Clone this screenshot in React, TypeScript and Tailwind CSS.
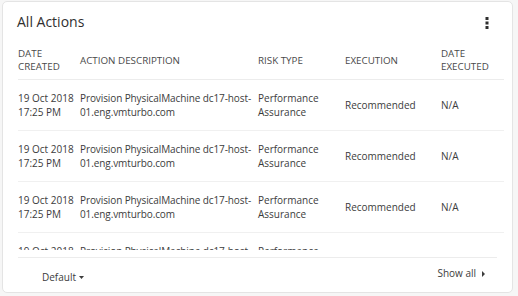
const rows = Array.from({ length: 4 }, () => ({
  date: "19 Oct 2018",
  time: "17:25 PM",
  desc: "Provision PhysicalMachine dc17-host-01.eng.vmturbo.com",
  risk: "Performance Assurance",
  exec: "Recommended",
  executed: "N/A",
}));

export default function App() {
  return (
    <div
      className="h-[296px] w-[518px] bg-[#f6f6f6] pl-[2px] pt-[1px] text-[#3c3c3c]"
      style={{ fontFamily: '"Open Sans", "Noto Sans", sans-serif' }}
    >
      <div className="flex h-[292px] w-[511px] flex-col overflow-hidden rounded-[5px] border border-[#e4e4e4] bg-white">
        <div className="flex h-[39px] items-center justify-between pl-[14px] pr-[23px]">
          <h2 className="text-[14px] font-normal text-[#2f2f2f]">All Actions</h2>
          <svg width="4" height="12" viewBox="0 0 4 12" className="mt-[3px]">
            <rect x="0.5" y="0" width="3" height="3" fill="#2f2f2f" />
            <rect x="0.5" y="4.5" width="3" height="3" fill="#2f2f2f" />
            <rect x="0.5" y="9" width="3" height="3" fill="#2f2f2f" />
          </svg>
        </div>

        <div className="mb-[7px] h-[210px] overflow-hidden px-[15px]">
          <table className="w-[486px] table-fixed border-collapse text-left text-[10px] leading-[14px]">
            <colgroup>
              <col className="w-[62px]" />
              <col className="w-[178px]" />
              <col className="w-[87px]" />
              <col className="w-[96px]" />
              <col />
            </colgroup>
            <thead>
              <tr className="h-[39px] border-b border-[#ececec] text-[9.8px] uppercase leading-[13px] text-[#4a4a4a]">
                <th className="font-normal">Date<br />Created</th>
                <th className="font-normal">Action Description</th>
                <th className="font-normal">Risk Type</th>
                <th className="font-normal">Execution</th>
                <th className="font-normal">Date<br />Executed</th>
              </tr>
            </thead>
            <tbody>
              {rows.map((r, i) => (
                <tr key={i} className="h-[51px] border-b border-[#f0f0f0]">
                  <td className="whitespace-nowrap">
                    {r.date}
                    <br />
                    {r.time}
                  </td>
                  <td className="tracking-[-0.1px]">{r.desc}</td>
                  <td>{r.risk}</td>
                  <td>{r.exec}</td>
                  <td>{r.executed}</td>
                </tr>
              ))}
            </tbody>
          </table>
        </div>

        <div className="mx-[15px] flex h-[35px] items-center justify-between border-t border-[#ececec] text-[10px]">
          <button type="button" className="ml-[24px] mt-[4px] flex items-center gap-[3px]">
            Default
            <svg width="5" height="3" viewBox="0 0 5 3">
              <path d="M0 0h5L2.5 3z" fill="#3c3c3c" />
            </svg>
          </button>
          <button type="button" className="mb-[3px] mr-[12px] flex items-center gap-[6px]">
            Show all
            <svg width="3" height="6" viewBox="0 0 3 6">
              <path d="M0 0l3 3-3 3z" fill="#3c3c3c" />
            </svg>
          </button>
        </div>
      </div>
    </div>
  );
}
